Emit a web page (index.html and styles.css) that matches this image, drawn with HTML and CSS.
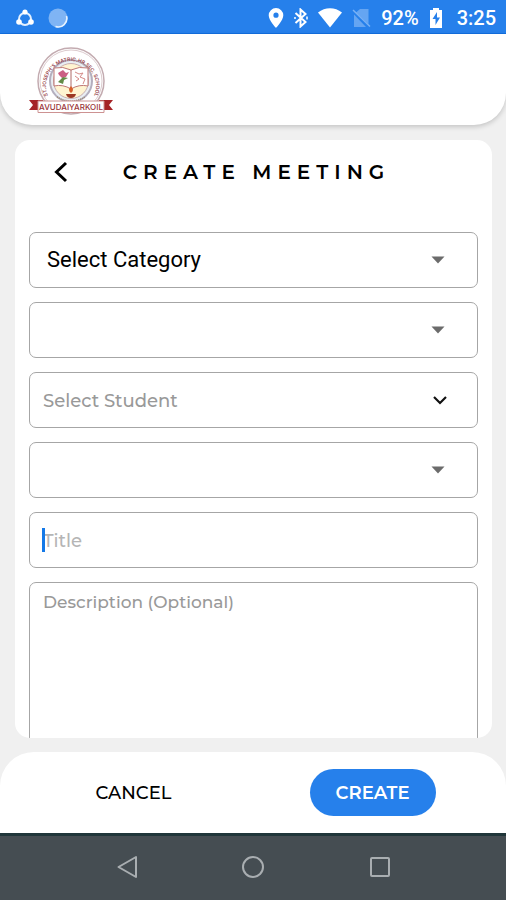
FILE: index.html
```html
<!DOCTYPE html>
<html lang="en">
<head>
<meta charset="utf-8">
<meta name="viewport" content="width=device-width, initial-scale=1">
<title>Create Meeting</title>
<link rel="stylesheet" href="styles.css">
</head>
<body>
<div class="status-bar">
  <div class="status-group">
    <svg width="18" height="18" viewBox="0 0 18 18" fill="none" stroke="#e3f0ff" stroke-width="2"><circle cx="9" cy="10" r="6"/><g fill="#fff" stroke="none"><circle cx="9" cy="3" r="2.6"/><circle cx="3" cy="13" r="2.8"/><circle cx="15" cy="13" r="2.8"/></g></svg>
    <svg width="20" height="20" viewBox="0 0 20 20"><circle cx="10" cy="10" r="9.5" fill="#7fb4f4"/><path d="M18.5 8a8.6 8.6 0 0 1-11 10.5" fill="none" stroke="#e8f3ff" stroke-width="1.6"/></svg>
  </div>
  <div class="status-group status-right">
    <svg width="16" height="20" viewBox="0 0 16 20"><path fill="#fff" fill-rule="evenodd" d="M8 0a7.3 7.3 0 0 0-7.3 7.3C.7 12.500 8 20 8 20s7.300-7.500 7.300-12.700A7.300 7.300 0 0 0 8 0Zm0 4.600a2.600 2.600 0 1 1 0 5.200 2.600 2.600 0 0 1 0-5.200Z"/></svg>
    <svg width="14" height="20" viewBox="0 0 14 20" fill="none" stroke="#fff" stroke-width="2"><path d="m1.500 5 10 9-5 4.500v-17l5 4.500-10 9"/><path d="M13 8.500v3M1 9v2" stroke-width="1.500"/></svg>
    <svg class="wifi" width="24" height="20" viewBox="0 0 24 20"><path fill="#fff" d="M0 4.500C7-1.300 17-1.300 24 4.500L12 19.500Z"/></svg>
    <svg class="sim" width="19" height="20" viewBox="0 0 19 20"><path fill="#65a5f2" d="M8 1h8.500v15L4 4.500ZM2 6.500 14 19H2Z"/><path d="m1 2 17 16.500" stroke="#79b1f5" stroke-width="1.500"/></svg>
    <span class="battery-level">92%</span>
    <svg class="battery" width="14" height="20" viewBox="0 0 14 20"><path fill="#fff" d="M4 0h6v2h3v18H1V2h3Z"/><path fill="#2680eb" d="M8 4 3.500 11h3v6L11 9.500H8Z"/></svg>
    <span class="clock">3:25</span>
  </div>
</div>

<header class="app-header">
  <svg class="school-logo" width="86" height="70" viewBox="0 0 86 70" role="img" aria-label="School emblem">
    <defs><path id="ring" d="M23 55A25 25 0 1 1 63 55"/></defs>
    <circle cx="43" cy="35" r="33" fill="#fff" stroke="#c3abb0" stroke-width="1.500"/>
    <circle cx="43" cy="35" r="31" fill="none" stroke="#dccbce"/>
    <circle cx="43" cy="35" r="21" fill="#e9eef3" stroke="#b4afbe" stroke-width="2"/>
    <circle cx="43" cy="35" r="17.500" fill="#fff4d1" stroke="#c9aeb0"/>
    <text class="ring-text"><textPath href="#ring" startOffset="50%" text-anchor="middle">ST.JOSEPH'S MATRIC.HR.SEC. SCHOOL</textPath></text>
    <path d="M26 22q9-2 17 2 8-4 17-2v18q-9-2-17 3-8-5-17-3Z" fill="#fff" stroke="#be7775"/>
    <path d="M43 24v18" stroke="#b06a68"/>
    <path d="m30 27 5-3 3 3 3-1-3 5-4 1-3-3Z" fill="#cb5f84"/>
    <path d="m30 36 5-5 5 1-4 2-1 4Z" fill="#638c47"/>
    <path d="m47 26 4 2 4-1-3 4 5 2-2 5m-7-3 3-2-4-3" fill="none" stroke="#d58b88"/>
    <path d="M38 48h10q-1 4-5 4t-5-4Z" fill="#9c3823"/>
    <path d="M43 40q4 4 0 7-4-3 0-7Z" fill="#d8602b"/>
    <path d="M29 51q14 8 28 0" fill="none" stroke="#9c8a75" stroke-width="1.500" stroke-dasharray="1 1"/>
    <path d="M1 54h14v10H1l4-5ZM85 54H71v10h14l-4-5Z" fill="#a52427"/>
    <path d="M10 55h66v11.500H10Z" fill="#fff" stroke="#cd9292"/>
    <text class="ribbon-text" x="43" y="64" text-anchor="middle">AVUDAIYARKOIL</text>
  </svg>
</header>

<main class="card">
  <div class="card-heading">
    <button class="back" type="button" aria-label="Back"><svg width="16" height="22" viewBox="0 0 16 22" fill="none" stroke="#000" stroke-width="3"><path d="m13 2-9.500 9L13 20"/></svg></button>
    <h1>CREATE MEETING</h1>
  </div>
  <form class="fields" id="meeting">
    <div class="field">
      <select class="control category" aria-label="Category"><option>Select Category</option></select>
      <svg class="arrow" width="14" height="8" viewBox="0 0 14 8"><path d="M.5.500h13L7 7.500Z" fill="#6b6b6b"/></svg>
    </div>
    <div class="field">
      <select class="control" aria-label="Class"><option></option></select>
      <svg class="arrow" width="14" height="8" viewBox="0 0 14 8"><path d="M.5.500h13L7 7.500Z" fill="#6b6b6b"/></svg>
    </div>
    <div class="field">
      <select class="control student" aria-label="Student"><option>Select Student</option></select>
      <svg class="arrow chevron" width="16" height="10" viewBox="0 0 16 10" fill="none" stroke="#111" stroke-width="2.200"><path d="m2 2 6 6 6-6"/></svg>
    </div>
    <div class="field">
      <select class="control" aria-label="Meeting type"><option></option></select>
      <svg class="arrow" width="14" height="8" viewBox="0 0 14 8"><path d="M.5.500h13L7 7.500Z" fill="#6b6b6b"/></svg>
    </div>
    <div class="field">
      <input class="control title" type="text" placeholder="Title" aria-label="Title">
      <span class="cursor"></span>
    </div>
    <textarea class="control description" placeholder="Description (Optional)" aria-label="Description"></textarea>
  </form>
</main>

<footer class="actions">
  <button class="action" type="button">CANCEL</button>
  <button class="action primary" type="submit" form="meeting">CREATE</button>
</footer>

<nav class="system-nav" aria-label="System">
  <button type="button" aria-label="Back"><svg width="22" height="24" viewBox="0 0 22 24" fill="none" stroke="#a9aeb1" stroke-width="2" stroke-linejoin="round"><path d="M20 2v20L2.500 12Z"/></svg></button>
  <button type="button" aria-label="Home"><svg width="24" height="24" viewBox="0 0 24 24" fill="none" stroke="#a9aeb1" stroke-width="2"><circle cx="12" cy="12" r="10"/></svg></button>
  <button type="button" aria-label="Recent apps"><svg width="22" height="22" viewBox="0 0 22 22" fill="none" stroke="#a9aeb1" stroke-width="2"><rect x="2" y="2" width="18" height="18" rx="1"/></svg></button>
</nav>
</body>
</html>
```
FILE: styles.css
```css
* { box-sizing: border-box; }

body {
  margin: 0;
  height: 100vh;
  display: flex;
  flex-direction: column;
  background: #f0f0f0;
  color: #000;
  font-family: Montserrat, Inter, sans-serif;
}

svg { display: block; flex: none; }
button { border: 0; padding: 0; background: none; color: inherit; font: inherit; }

.status-bar {
  flex: none;
  display: flex;
  justify-content: space-between;
  align-items: center;
  height: 34px;
  padding: 2px 10px 0 16px;
  border-bottom: 1px solid #126fe0;
  background: #2680eb;
  color: #fff;
  font: 500 20px/24px Roboto, sans-serif;
}
.status-group { display: flex; align-items: center; gap: 14px; }
.status-right { gap: 10px; }
.clock { margin-left: 4px; }

.app-header {
  flex: none;
  padding: 12px 28px 9px;
  border-radius: 0 0 32px 32px;
  background: #fff;
  box-shadow: 0 2px 5px #0000002e;
}
.ring-text { font: 600 5px Inter, sans-serif; fill: #9b4a50; }
.ribbon-text { font: 500 8px Inter, sans-serif; fill: #9b3438; }

.card {
  flex: 1 1 0;
  min-height: 0;
  margin: 15px 14px 14px 15px;
  padding: 0 14px;
  overflow: hidden;
  border-radius: 15px;
  background: #fff;
}
.card-heading {
  display: grid;
  grid-template-columns: 64px 1fr 64px;
  align-items: center;
  height: 64px;
  margin-bottom: 28px;
}
.back { justify-self: center; }
h1 {
  margin: 0;
  padding-left: 6px;
  text-align: center;
  white-space: nowrap;
  font-size: 20px;
  line-height: 24px;
  font-weight: 600;
  letter-spacing: 6px;
}

.fields { display: flex; flex-direction: column; gap: 14px; }
.field { display: grid; align-items: center; }
.field > * { grid-area: 1 / 1; }
.control {
  display: block;
  width: 100%;
  height: 56px;
  margin: 0;
  padding: 2px 13px 0;
  border: 1px solid #a6a6a6;
  border-radius: 7px;
  outline: 0;
  appearance: none;
  background: #fff;
  color: #000;
  font: 500 18px/24px Montserrat, Inter, sans-serif;
}
.category { padding: 0 17px; font: 400 22px/28px Roboto, sans-serif; }
.student { color: #999; }
.control::placeholder { color: #999; opacity: 1; }
.title::placeholder { color: #b5b5b5; }
.arrow { justify-self: end; margin-right: 33px; pointer-events: none; }
.chevron { margin-right: 30px; }
.cursor { width: 3px; height: 24px; margin-left: 13px; background: #1479e8; pointer-events: none; }
.description { height: 200px; padding: 7px 13px; resize: none; font-size: 17px; }

.actions {
  flex: none;
  display: grid;
  grid-template-columns: 1fr 1fr;
  place-items: center;
  padding: 17px 14px;
  border-radius: 34px 34px 0 0;
  background: #fff;
}
.action {
  min-width: 126px;
  height: 47px;
  padding-top: 1px;
  border-radius: 24px;
  font-size: 18px;
  font-weight: 500;
  line-height: 24px;
}
.primary { background: #2680eb; color: #fff; font-weight: 600; }

.system-nav {
  flex: none;
  display: grid;
  grid-template-columns: repeat(3, 1fr);
  place-items: center;
  height: 67px;
  padding: 0 12.5%;
  background: #454d52;
  box-shadow: inset 0 3px #20363a;
}
```
